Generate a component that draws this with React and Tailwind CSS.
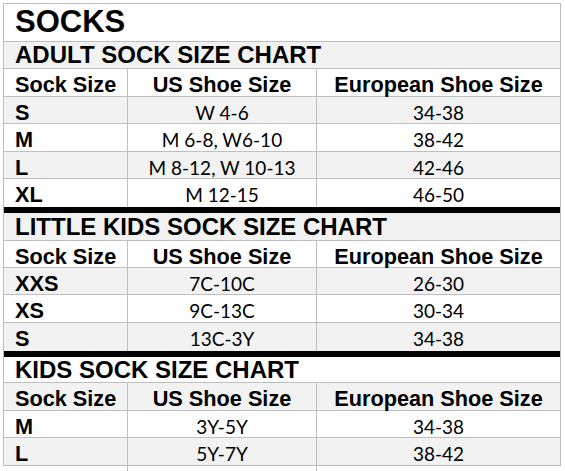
import React from 'react';

const charts = [
  {
    title: 'ADULT SOCK SIZE CHART',
    titleH: 'h-[27px]',
    headH: 'h-[28px]',
    rows: [
      ['S', 'W 4-6', '34-38', 'h-[27px]'],
      ['M', 'M 6-8, W6-10', '38-42', 'h-[28px]'],
      ['L', 'M 8-12, W 10-13', '42-46', 'h-[27px]'],
      ['XL', 'M 12-15', '46-50', 'h-[28px]'],
    ],
  },
  {
    title: 'LITTLE KIDS SOCK SIZE CHART',
    titleH: 'h-[28px]',
    headH: 'h-[27px]',
    rows: [
      ['XXS', '7C-10C', '26-30', 'h-[27px]'],
      ['XS', '9C-13C', '30-34', 'h-[28px]'],
      ['S', '13C-3Y', '34-38', 'h-[28px]'],
    ],
  },
  {
    title: 'KIDS SOCK SIZE CHART',
    titleH: 'h-[26px]',
    headH: 'h-[28px]',
    rows: [
      ['M', '3Y-5Y', '34-38', 'h-[27px]'],
      ['L', '5Y-7Y', '38-42', 'h-[27px]'],
    ],
  },
];

const arial = "font-['Liberation_Sans',Arial,sans-serif]";
const calibri = "font-['Lato','Noto_Sans',sans-serif]";

const Row = ({ cells, height, gray, last, header }) => (
  <div
    className={`grid grid-cols-[124px_189px_1fr] ${height} ${gray ? 'bg-[#f2f2f2]' : 'bg-white'} ${last ? '' : 'border-b border-[#bfbfbf]'}`}
  >
    <div className={`flex items-center pl-[11px] border-r border-[#bfbfbf] ${arial} font-bold text-[21.7px] text-black`}>
      {cells[0]}
    </div>
    <div
      className={`flex items-center justify-center border-r border-[#bfbfbf] text-black ${header ? `${arial} font-bold text-[21.7px]` : `${calibri} text-[19px]`}`}
    >
      {cells[1]}
    </div>
    <div
      className={`flex items-center justify-center text-black ${header ? `${arial} font-bold text-[21.7px]` : `${calibri} text-[19px]`}`}
    >
      {cells[2]}
    </div>
  </div>
);

const App = () => {
  let stripe = 0;
  const next = () => stripe++ % 2 === 1;

  return (
    <div className="w-[565px] h-[471px] bg-white pt-[3px] pl-[3px]">
      <div className="w-[558px] border border-[#bfbfbf] flex flex-col">
        <div className={`h-[38px] flex items-center pl-[11px] border-b border-[#bfbfbf] ${arial} font-bold text-[31px] text-black ${next() ? 'bg-[#f2f2f2]' : 'bg-white'}`}>
          SOCKS
        </div>
        {charts.map((chart, ci) => (
          <div key={chart.title} className="flex flex-col">
            <div
              className={`${chart.titleH} flex items-center pl-[11px] border-b border-[#bfbfbf] ${arial} font-bold text-[24px] text-black ${next() ? 'bg-[#f2f2f2]' : 'bg-white'}`}
            >
              {chart.title}
            </div>
            <Row cells={['Sock Size', 'US Shoe Size', 'European Shoe Size']} height={chart.headH} header gray={next()} />
            {chart.rows.map((r, ri) => (
              <Row key={ri} cells={r} height={r[3]} gray={next()} last={ri === chart.rows.length - 1} />
            ))}
            {ci < charts.length - 1 && <div className="h-[6px] bg-black" />}
          </div>
        ))}
      </div>
    </div>
  );
};

export default App;
